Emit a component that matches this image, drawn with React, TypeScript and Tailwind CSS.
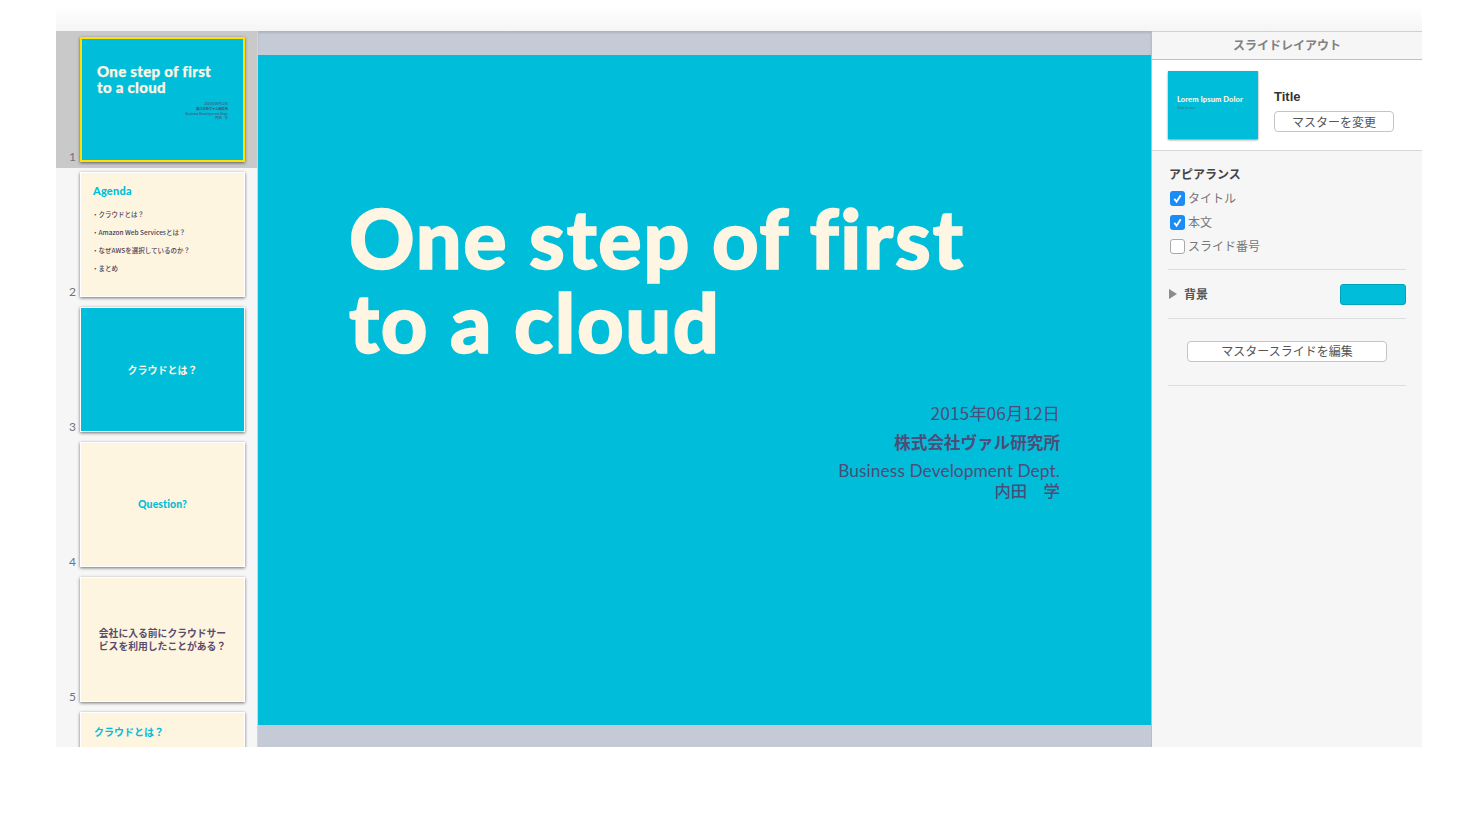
const jp = '"Noto Sans CJK JP", sans-serif';

function Thumb({ n, selected, className, children }: { n: number; selected?: boolean; className: string; children?: React.ReactNode }) {
  return (
    <div className={"flex shrink-0 pl-[12px] " + (selected ? "h-[137px] bg-[#c9c9c9] pt-[6px]" : "h-[135px] pt-[4px]")}>
      <div className="flex h-[125px] w-[12px] items-end justify-start">
        <span className="ml-[1px] font-['Lato'] text-[12px] leading-[10px] text-[#6d7480]">{n}</span>
      </div>
      <div
        className={
          "h-[125px] w-[165px] shrink-0 overflow-hidden shadow-[0_1px_3px_rgba(0,0,0,0.55)] " +
          (selected ? "border-2 border-[#ffe000] " : "border border-white ") +
          className
        }
      >
        {children}
      </div>
    </div>
  );
}

function Sidebar() {
  return (
    <div className="h-full w-[202px] shrink-0 overflow-hidden border-r border-[#d4d4d4] bg-[#f6f6f6] font-['Noto_Sans_CJK_JP']">
      <Thumb n={1} selected className="bg-[#00bed9]">
        <div className="pl-[15px] pt-[24px] font-['Lato'] text-[15px] leading-[16px] font-black tracking-[0.3px] text-[#fff5e3] [font-variant-ligatures:none] [-webkit-text-stroke:0.25px_#fff5e3]">
          One step of first
          <br />
          to a cloud
        </div>
        <div className="mt-[7px] pr-[15px] text-right text-[3.2px] leading-[4.8px] text-[#4d3f6e]">
          <div>2015年06月12日</div>
          <div className="font-bold">株式会社ヴァル研究所</div>
          <div>Business Development Dept.</div>
          <div>内田　学</div>
        </div>
      </Thumb>
      <Thumb n={2} className="bg-[#fdf5e0]">
        <div className="pl-[12px] pt-[11px] font-['Lato'] text-[11px] leading-[14px] font-black tracking-[0.2px] text-[#00bed9]">Agenda</div>
        <ul className="mt-[11px] flex flex-col gap-[8px] pl-[11px] text-[6.5px] leading-[10px] font-medium text-[#4a4058]">
          <li>・クラウドとは？</li>
          <li>・Amazon Web Servicesとは？</li>
          <li>・なぜAWSを選択しているのか？</li>
          <li>・まとめ</li>
        </ul>
      </Thumb>
      <Thumb n={3} className="flex items-center justify-center bg-[#00bed9]">
        <span className="text-[10px] font-bold text-[#fff5e3]">クラウドとは？</span>
      </Thumb>
      <Thumb n={4} className="flex items-center justify-center bg-[#fdf5e0]">
        <span className="font-['Lato'] text-[10.5px] font-black tracking-[0.1px] text-[#00bed9]">Question?</span>
      </Thumb>
      <Thumb n={5} className="flex items-center justify-center bg-[#fdf5e0]">
        <span className="w-[128px] text-center text-[9.8px] leading-[13px] font-bold text-[#574c6e]">
          会社に入る前にクラウドサービスを利用したことがある？
        </span>
      </Thumb>
      <Thumb n={6} className="bg-[#fdf5e0]">
        <div className="pl-[13px] pt-[11px] text-[10px] leading-[16px] font-bold text-[#00bed9]">クラウドとは？</div>
      </Thumb>
    </div>
  );
}

function Canvas() {
  return (
    <div className="flex h-full w-[893px] shrink-0 flex-col bg-[#c5cbd6]">
      <div className="h-[24px] shrink-0 shadow-[inset_0_2px_2px_rgba(0,0,0,0.12)]" />
      <div className="h-[670px] shrink-0 bg-[#00bed9] pl-[91px] pr-[91px] pt-[141px]">
        <h1 className="font-['Lato'] text-[81px] leading-[84px] font-black tracking-[1.6px] text-[#fff5e3] [font-variant-ligatures:none] [-webkit-text-stroke:1.5px_#fff5e3]">
          One step of first
          <br />
          to a cloud
        </h1>
        <div className="mt-[36px] text-right text-[#4e4c78]" style={{ fontFamily: jp }}>
          <div className="text-[17.4px] leading-[26px]">2015年06月12日</div>
          <div className="mt-[3px] text-[16.6px] leading-[26px] font-bold">株式会社ヴァル研究所</div>
          <div className="mt-[6px] font-['Lato'] text-[17.3px] leading-[19px] tracking-[0.1px]">Business Development Dept.</div>
          <div className="text-[16.4px] leading-[20px] font-medium">内田　学</div>
        </div>
      </div>
      <div className="flex-1" />
    </div>
  );
}

function Check({ on, label }: { on?: boolean; label: string }) {
  return (
    <div className="flex h-[24px] items-center gap-[3px]">
      {on ? (
        <span className="flex h-[15px] w-[15px] items-center justify-center rounded-[3px] bg-[#1c8cf5]">
          <svg viewBox="0 0 12 12" className="h-[11px] w-[11px]" fill="none" stroke="white" strokeWidth="2">
            <path d="M2.5 6.5 L5 9.5 L9.5 2.5" />
          </svg>
        </span>
      ) : (
        <span className="h-[15px] w-[15px] rounded-[3px] border border-[#a9a9a9] bg-white" />
      )}
      <span className="text-[12px] text-[#777]">{label}</span>
    </div>
  );
}

function Inspector() {
  return (
    <div className="flex h-full w-[271px] shrink-0 flex-col border-l border-[#b9bdc5] bg-[#f6f6f6]" style={{ fontFamily: jp }}>
      <div className="flex h-[29px] shrink-0 items-center justify-center border-t border-b border-t-[#d0d0d0] border-b-[#bcc1cb] pb-[2px] text-[12px] font-bold text-[#808080]">
        スライドレイアウト
      </div>
      <div className="flex h-[91px] shrink-0 border-b border-[#d8d8d8] bg-white pl-[16px] pt-[11px]">
        <div className="h-[68px] w-[90px] bg-[#00bed9] pl-[9px] pt-[23px] shadow-[0_1px_2px_rgba(0,0,0,0.45)]">
          <div className="font-['Lato'] text-[7.5px] leading-[12px] font-black tracking-[0.1px] whitespace-nowrap text-[#fff5e3]">Lorem Ipsum Dolor</div>
          <div className="font-['Lato'] text-[3px] leading-[5px] text-[#3d6c90]">Dolor sit amet</div>
        </div>
        <div className="ml-[16px] pt-[16px]">
          <div className="font-['Liberation_Sans'] text-[13px] leading-[20px] font-bold text-[#333]">Title</div>
          <button className="mt-[4px] h-[21px] w-[120px] rounded-[4px] border border-[#c4c4c4] bg-white text-[12px] leading-[18px] text-[#555]">
            マスターを変更
          </button>
        </div>
      </div>
      <div className="flex flex-1 flex-col px-[16px]">
        <div className="pl-[1px] pt-[14px] text-[12px] leading-[18px] font-bold text-[#444]">アピアランス</div>
        <div className="flex flex-col pl-[2px] pt-[3px]">
          <Check on label="タイトル" />
          <Check on label="本文" />
          <Check label="スライド番号" />
        </div>
        <div className="mt-[11px] flex h-[50px] items-center justify-between border-y border-[#dedede]">
          <div className="flex items-center gap-[7px] pl-[1px]">
            <span className="h-0 w-0 border-y-[5px] border-l-[8px] border-y-transparent border-l-[#8c8c8c]" />
            <span className="text-[12px] font-bold text-[#555]">背景</span>
          </div>
          <div className="h-[21px] w-[66px] rounded-[3px] border border-[#00a3ba] bg-[#00bed9]" />
        </div>
        <div className="flex h-[67px] items-center justify-center border-b border-[#dedede]">
          <button className="mb-[2px] h-[21px] w-[200px] rounded-[4px] border border-[#c4c4c4] bg-white text-[12px] leading-[18px] text-[#555]">
            マスタースライドを編集
          </button>
        </div>
      </div>
    </div>
  );
}

export default function App() {
  return (
    <div className="h-[827px] w-[1478px] overflow-hidden bg-white">
      <div className="ml-[56px] h-[31px] w-[1366px] bg-gradient-to-b from-white from-20% to-[#f5f5f5]" />
      <div className="ml-[56px] flex h-[716px] w-[1366px] overflow-hidden">
        <Sidebar />
        <Canvas />
        <Inspector />
      </div>
    </div>
  );
}
